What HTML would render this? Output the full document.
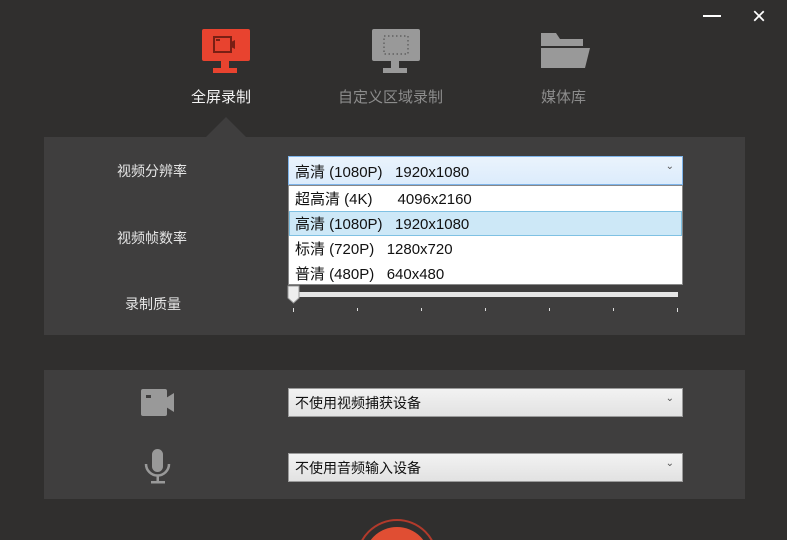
<!DOCTYPE html>
<html><head><meta charset="utf-8"><style>
*{margin:0;padding:0;box-sizing:border-box}
html,body{width:787px;height:540px;overflow:hidden;background:#302f2e}
#w{position:relative;width:787px;height:540px;overflow:hidden;background:#302f2e;font-family:"Liberation Sans","Microsoft YaHei","Noto Sans CJK SC",sans-serif}
.a{position:absolute}
.panel{position:absolute;left:44px;width:701px;background:#3f3e3e}
.lbl{position:absolute;color:#e6e6e6;font-size:14px}
.sel{position:absolute;left:288px;width:395px;height:29px;border:1px solid #9a9a9a;background:linear-gradient(#f2f2f2,#e2e2e2);font-size:14px;color:#111;padding:4px 0 0 6px}
.sel .c{position:absolute;right:8px;top:4px;font-size:10px;color:#555}
.tab{position:absolute;font-size:15px;color:#8c8c8c;top:86px}
.dd{position:absolute;left:288px;top:185px;width:395px;height:100px;background:#fff;border:1px solid #888;font-size:15px;color:#111}
.dd div{height:25px;padding:2px 0 0 6px;white-space:pre}
</style></head><body><div id="w">
<div class="a" style="left:703px;top:15px;width:18px;height:2px;background:#fff"></div>
<div class="a" style="left:752px;top:3px;color:#fff;font-size:24px">×</div>

<svg class="a" style="left:200px;top:28px" width="52" height="46">
<rect x="2" y="1" width="48" height="32" rx="2" fill="#e8432f"/>
<rect x="21" y="33" width="8" height="7" fill="#e8432f"/><rect x="13" y="40" width="24" height="5" fill="#e8432f"/>
<rect x="14" y="9" width="17" height="15" fill="none" stroke="#7a1f14" stroke-width="2"/>
<path d="M31 14 L35 12 V21 L31 19Z" fill="#7a1f14"/><rect x="16" y="11" width="4" height="2" fill="#7a1f14"/>
</svg>
<div class="tab" style="left:191px;color:#f2f2f2">全屏录制</div>
<svg class="a" style="left:370px;top:28px" width="52" height="46">
<rect x="2" y="1" width="48" height="32" rx="2" fill="#999"/>
<rect x="21" y="33" width="8" height="7" fill="#999"/><rect x="13" y="40" width="24" height="5" fill="#999"/>
<rect x="14" y="8" width="24" height="18" fill="none" stroke="#555" stroke-width="1.2" stroke-dasharray="1.5 2.5"/>
</svg>
<div class="tab" style="left:338px">自定义区域录制</div>
<svg class="a" style="left:540px;top:30px" width="52" height="40">
<path d="M1 3 H16 L20 9 H43 V16 H1Z M1 18 H50 L45 38 H1Z" fill="#999"/>
</svg>
<div class="tab" style="left:541px">媒体库</div>

<div class="a" style="left:206px;top:117px;width:0;height:0;border-left:20px solid transparent;border-right:20px solid transparent;border-bottom:20px solid #3f3e3e"></div>
<div class="panel" style="top:137px;height:198px"></div>
<div class="lbl" style="left:117px;top:161px">视频分辨率</div>
<div class="lbl" style="left:117px;top:228px">视频帧数率</div>
<div class="lbl" style="left:125px;top:294px">录制质量</div>
<div class="sel" style="top:156px;border-color:#7eb4ea;background:linear-gradient(#eaf3fc,#dcecfc);font-size:15px;padding-top:4px">高清 (1080P)&nbsp;&nbsp; 1920x1080<span class="c">⌄</span></div>
<div class="dd">
<div>超高清 (4K)      4096x2160</div>
<div style="background:#cde8f7;border:1px solid #7fc1e3;padding-left:5px;padding-top:1px">高清 (1080P)   1920x1080</div>
<div>标清 (720P)   1280x720</div>
<div>普清 (480P)   640x480</div>
</div>
<div class="a" style="left:296px;top:292px;width:382px;height:5px;background:#e6e6e6"></div>
<svg class="a" style="left:287px;top:285px" width="14" height="20"><path d="M1 1 H12 V13 L6.5 18 L1 13Z" fill="#eee" stroke="#999"/></svg>
<svg class="a" style="left:290px;top:306px" width="392" height="8" fill="#ddd">
<rect x="3" y="2" width="1" height="4"/><rect x="67" y="2" width="1" height="3"/><rect x="131" y="2" width="1" height="3"/><rect x="195" y="2" width="1" height="3"/><rect x="259" y="2" width="1" height="3"/><rect x="323" y="2" width="1" height="3"/><rect x="387" y="2" width="1" height="4"/>
</svg>

<div class="panel" style="top:370px;height:129px"></div>
<svg class="a" style="left:140px;top:388px" width="36" height="30"><rect x="1" y="1" width="26" height="27" rx="2" fill="#999"/><path d="M26 10 L34 5 V24 L26 19Z" fill="#999"/><rect x="6" y="7" width="5" height="3" fill="#3f3e3e"/></svg>
<svg class="a" style="left:142px;top:448px" width="32" height="38"><rect x="10" y="1" width="11" height="23" rx="5.5" fill="#999"/><path d="M4 16 A11.5 11.5 0 0 0 27 16" fill="none" stroke="#999" stroke-width="2.5"/><rect x="14.5" y="28" width="2.5" height="6" fill="#999"/><rect x="9" y="33" width="14" height="2.5" fill="#999"/></svg>
<div class="sel" style="top:388px">不使用视频捕获设备<span class="c">⌄</span></div>
<div class="sel" style="top:453px">不使用音频输入设备<span class="c">⌄</span></div>

<svg class="a" style="left:354px;top:518px" width="86" height="22"><circle cx="43" cy="42" r="40" fill="none" stroke="#b23a2b" stroke-width="2"/><circle cx="43" cy="42" r="33" fill="#e04e33"/></svg>
</div></body></html>
